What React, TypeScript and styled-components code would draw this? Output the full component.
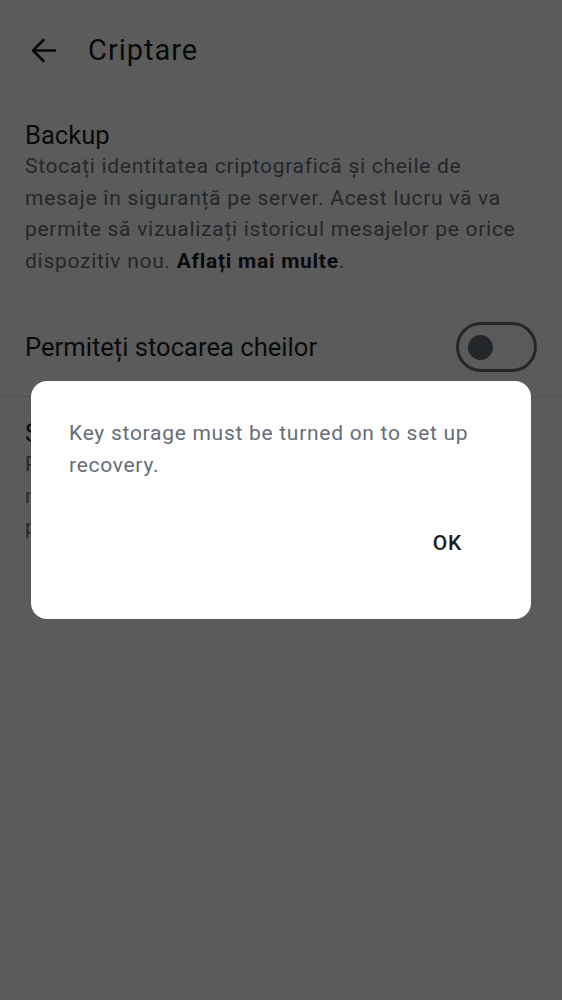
import React from "react";
import styled, { createGlobalStyle } from "styled-components";

const Global = createGlobalStyle`
  html, body { margin: 0; padding: 0; background: #ffffff; }
  body { font-family: Roboto, "Noto Sans", "Liberation Sans", sans-serif; -webkit-font-smoothing: antialiased; }
  * { box-sizing: border-box; }
`;

const Page = styled.div`
  width: 562px;
  height: 1000px;
  background: #ffffff;
  color: #1b1d22;
  overflow: hidden;
`;

const TopBar = styled.header`
  height: 100px;
  display: flex;
  align-items: center;
  padding-left: 30px;
  gap: 31px;
`;

const BackButton = styled.button`
  width: 27px;
  height: 27px;
  padding: 0;
  border: 0;
  background: transparent;
  display: flex;
  align-items: center;
  justify-content: center;
  color: #1b1d22;
`;

const Title = styled.h1`
  margin: 0;
  font-size: 29px;
  font-weight: 400;
  line-height: 36px;
  letter-spacing: 1px;
  color: #1b1d22;
`;

const Section = styled.section<{ $top: number }>`
  padding: ${(p) => p.$top}px 36px 0 25px;
`;

const SectionTitle = styled.div`
  font-size: 25.6px;
  line-height: 32px;
  color: #1b1d22;
`;

const Description = styled.p`
  margin: 0;
  font-size: 21px;
  line-height: 31.5px;
  letter-spacing: 0.72px;
  color: #656d77;

  b {
    font-weight: 700;
    color: #1b1d22;
  }
`;

const ToggleRow = styled.div`
  height: 98px;
  margin-top: 21px;
  padding: 0 25px;
  display: flex;
  align-items: center;
  justify-content: space-between;
`;

const ToggleLabel = styled.span`
  font-size: 25.6px;
  color: #1b1d22;
`;

const Switch = styled.div<{ $on: boolean }>`
  width: 81px;
  height: 50px;
  border-radius: 25px;
  border: 3px solid #656d77;
  display: flex;
  align-items: center;
  justify-content: ${(p) => (p.$on ? "flex-end" : "flex-start")};
  padding: 0 9px;
`;

const Thumb = styled.span`
  width: 25px;
  height: 25px;
  border-radius: 50%;
  background: #656d77;
`;

const Divider = styled.hr`
  margin: 0;
  border: 0;
  height: 1px;
  background: #e1e6ec;
`;

const Scrim = styled.div`
  position: fixed;
  inset: 0;
  background: rgba(0, 0, 0, 0.643);
  display: flex;
  align-items: center;
  justify-content: center;
`;

const Dialog = styled.div`
  width: 500px;
  height: 238px;
  background: #ffffff;
  border-radius: 16px;
  padding: 37px 38px 0;
  display: flex;
  flex-direction: column;
`;

const Message = styled.p`
  margin: 0;
  font-size: 21px;
  line-height: 31.5px;
  letter-spacing: 0.72px;
  color: #656d77;
`;

const Actions = styled.div`
  margin-top: 38px;
  display: flex;
  justify-content: flex-end;
  padding-right: 15px;
`;

const TextButton = styled.button`
  height: 48px;
  padding: 0 16px;
  border: 0;
  background: transparent;
  font-family: inherit;
  font-size: 21px;
  font-weight: 500;
  letter-spacing: 0.8px;
  color: #1b1d22;
`;

const ArrowBack = () => (
  <svg width="27" height="27" viewBox="0 0 27 27" fill="none">
    <path
      d="M25 13.5H3M13.5 3L3 13.5L13.5 24"
      stroke="currentColor"
      strokeWidth="2.6"
      strokeLinecap="round"
      strokeLinejoin="round"
    />
  </svg>
);

export default function App() {
  return (
    <>
      <Global />
      <Page>
        <TopBar>
          <BackButton aria-label="Înapoi">
            <ArrowBack />
          </BackButton>
          <Title>Criptare</Title>
        </TopBar>

        <Section $top={19}>
          <SectionTitle>Backup</SectionTitle>
          <Description>
            Stocați identitatea criptografică și cheile de mesaje în siguranță pe server. Acest
            lucru vă va permite să vizualizați istoricul mesajelor pe orice dispozitiv nou.{" "}
            <b>Aflați mai multe</b>.
          </Description>
        </Section>

        <ToggleRow>
          <ToggleLabel>Permiteți stocarea cheilor</ToggleLabel>
          <Switch $on={false}>
            <Thumb />
          </Switch>
        </ToggleRow>

        <Divider />

        <Section $top={20}>
          <SectionTitle>Setați recuperarea</SectionTitle>
          <Description>
            Puteți recupera identitatea criptografică și mesajele dacă pierdeți toate
            dispozitivele profesionale sau personale.
          </Description>
        </Section>
      </Page>

      <Scrim>
        <Dialog role="alertdialog">
          <Message>Key storage must be turned on to set up recovery.</Message>
          <Actions>
            <TextButton>OK</TextButton>
          </Actions>
        </Dialog>
      </Scrim>
    </>
  );
}
